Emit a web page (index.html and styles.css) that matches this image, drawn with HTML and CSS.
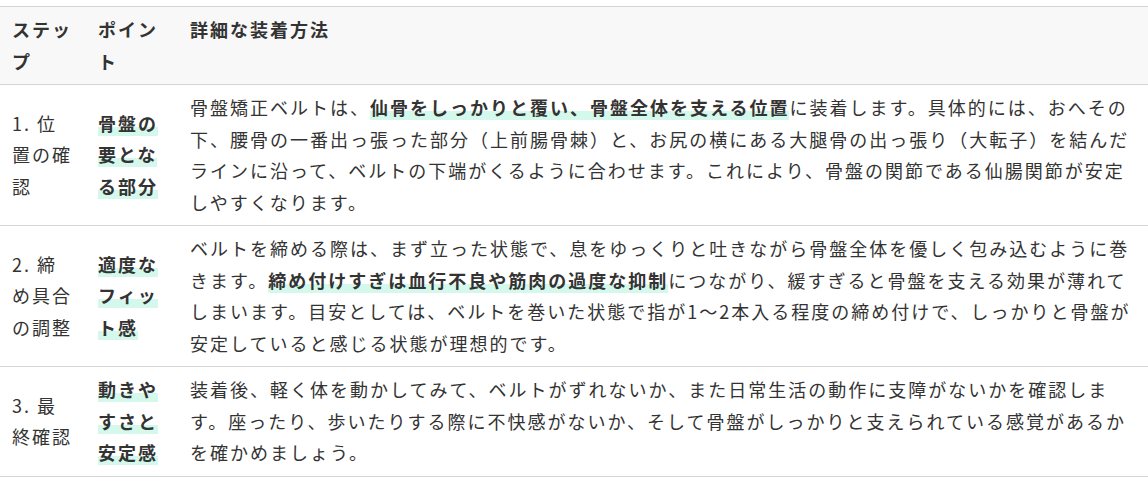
FILE: index.html
```html
<!DOCTYPE html>
<html lang="ja">

<head>
    <meta charset="UTF-8">
    <meta name="viewport" content="width=device-width, initial-scale=1.0">
    <title>骨盤矯正ベルトの装着方法</title>
    <link rel="stylesheet" href="styles.css">
</head>

<body>
    <table class="steps">
        <colgroup>
            <col class="col-step">
            <col class="col-point">
            <col>
        </colgroup>
        <thead>
            <tr>
                <th>ステップ</th>
                <th>ポイント</th>
                <th>詳細な装着方法</th>
            </tr>
        </thead>
        <tbody>
            <tr>
                <td>1. 位置の確認</td>
                <td><strong class="marker">骨盤の要となる部分</strong></td>
                <td>骨盤矯正ベルトは、<strong class="marker">仙骨をしっかりと覆い、骨盤全体を支える位置</strong>に装着します。具体的には、おへその下、腰骨の一番出っ張った部分（上前腸骨棘）と、お尻の横にある大腿骨の出っ張り（大転子）を結んだラインに沿って、ベルトの下端がくるように合わせます。これにより、骨盤の関節である仙腸関節が安定しやすくなります。</td>
            </tr>
            <tr>
                <td>2. 締め具合の調整</td>
                <td><strong class="marker">適度なフィット感</strong></td>
                <td>ベルトを締める際は、まず立った状態で、息をゆっくりと吐きながら骨盤全体を優しく包み込むように巻きます。<strong class="marker">締め付けすぎは血行不良や筋肉の過度な抑制</strong>につながり、緩すぎると骨盤を支える効果が薄れてしまいます。目安としては、ベルトを巻いた状態で指が1〜2本入る程度の締め付けで、しっかりと骨盤が安定していると感じる状態が理想的です。</td>
            </tr>
            <tr>
                <td>3. 最終確認</td>
                <td><strong class="marker">動きやすさと安定感</strong></td>
                <td>装着後、軽く体を動かしてみて、ベルトがずれないか、また日常生活の動作に支障がないかを確認します。座ったり、歩いたりする際に不快感がないか、そして骨盤がしっかりと支えられている感覚があるかを確かめましょう。</td>
            </tr>
        </tbody>
    </table>
</body>

</html>
```

FILE: styles.css
```css
body {
    margin: 0;
    padding-top: 6px;
    font-family: 'Noto Sans CJK JP', 'Noto Sans', sans-serif;
    font-size: 18px;
    color: #333;
    background-color: #fff;
}

.steps {
    width: 100%;
    border-collapse: collapse;
    table-layout: fixed;
    letter-spacing: 2px;
    line-height: 31.5px;
}

.col-step {
    width: 86px;
}

.col-point {
    width: 92px;
}

th,
td {
    padding: 7px 12px;
    text-align: left;
    border-top: 1px solid #d4d4d4;
    border-bottom: 1px solid #d4d4d4;
}

th {
    background-color: #f8f8f8;
    font-weight: bold;
    vertical-align: top;
}

td {
    vertical-align: middle;
}

.marker {
    font-weight: bold;
    background: linear-gradient(transparent 64%, #d4f8ec 64%);
}
```
